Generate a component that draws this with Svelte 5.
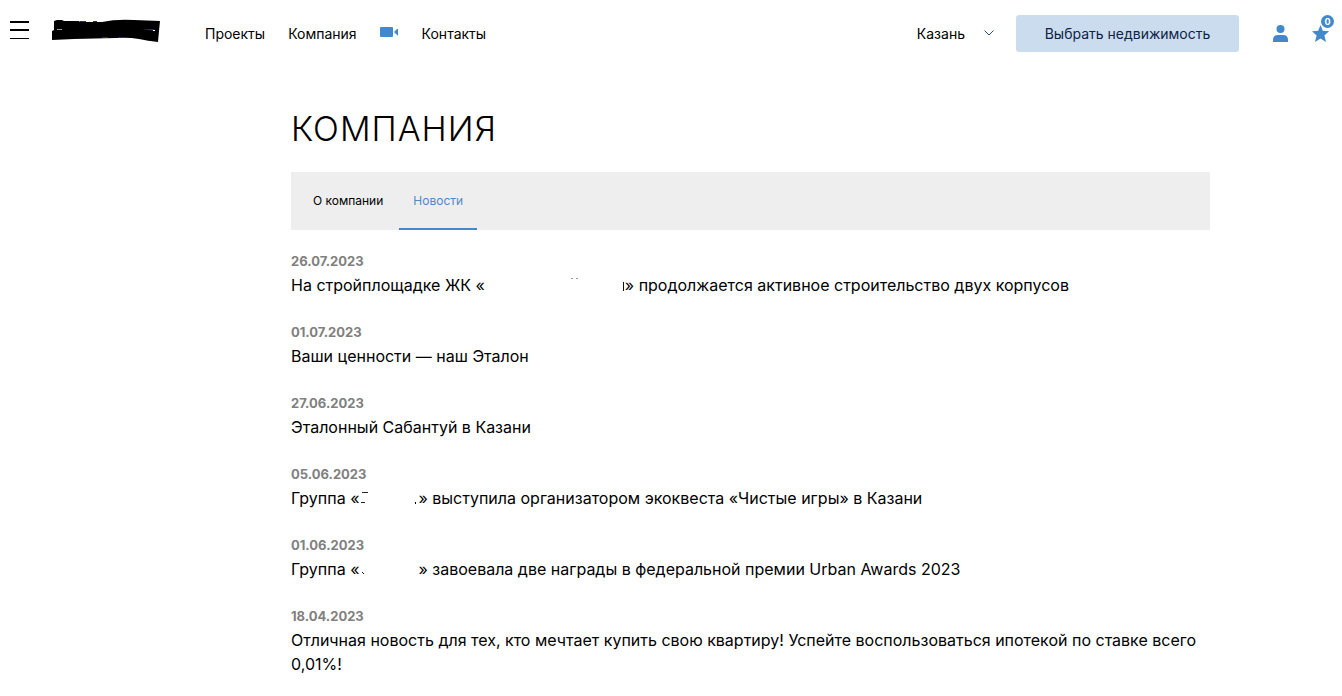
<script>
  const news = [
    { date: '26.07.2023', before: 'На стройплощадке ЖК «', gap: 'project', after: '» продолжается активное строительство двух корпусов' },
    { date: '01.07.2023', before: 'Ваши ценности — наш Эталон' },
    { date: '27.06.2023', before: 'Эталонный Сабантуй в Казани' },
    { date: '05.06.2023', before: 'Группа «', gap: 'group', after: '» выступила организатором экоквеста «Чистые игры» в Казани' },
    { date: '01.06.2023', before: 'Группа «', gap: 'award', after: '» завоевала две награды в федеральной премии Urban Awards 2023' },
    { date: '18.04.2023', before: 'Отличная новость для тех, кто мечтает купить свою квартиру! Успейте воспользоваться ипотекой по ставке всего 0,01%!' }
  ];
</script>

<header class="topbar">
  <button class="menu" aria-label="Меню"><span></span><span></span><span></span></button>
  <a class="logo" href="#home" aria-label="Главная">
    <svg width="108" height="24" viewBox="0 0 108 24">
      <path fill="#000" d="M2 2 L5 1 L10 1 L12 2 L27 2 L28 3 L50 3 Q64 0 82 1 L108 2 L107 12 L106 23 Q96 22 87 20 Q76 18 64 19 L22 20 L0 21 V12 L2 11 Z" />
      <path fill="#29296b" d="M28 2h6v1h-6zM41 2h4v1h-4zM90 10h12v2zM50 18h6v1h-6zM66 18h4v1h-4z" />
      <path fill="#999" d="M5 10h5v1H5z" />
      <path fill="#fff" d="M101 11h2v1h-2z" />
    </svg>
  </a>
  <nav class="links">
    <a href="#projects">Проекты</a>
    <a href="#company">Компания</a>
    <a class="video" href="#video" aria-label="Видео">
      <svg width="19" height="12" viewBox="0 0 19 12" fill="#4189cc">
        <rect x="0" y="0" width="13" height="10" rx="1" />
        <path d="M14 5 L17 2 Q18 1 18 3 V8 Q18 9 17 8 Z" />
      </svg>
    </a>
    <a href="#contacts">Контакты</a>
  </nav>
  <button class="city">Казань
    <svg width="10" height="6" viewBox="0 0 10 6" fill="none" stroke="#2d5578"><path d="M.5 .5 L5 5 L9.5 .5" /></svg>
  </button>
  <button class="choose">Выбрать недвижимость</button>
  <a class="user" href="#account" aria-label="Личный кабинет">
    <svg width="15" height="17" viewBox="0 0 15 17" fill="#4189cc">
      <circle cx="7.5" cy="4" r="4" />
      <path d="M0 17 V15 Q0 10 5 10 H10 Q15 10 15 15 V17 Z" />
    </svg>
  </a>
  <a class="favorites" href="#favorites" aria-label="Избранное">
    <svg width="18" height="17" viewBox="0 0 18 17" fill="#4189cc">
      <path d="M8.5 0 L10.8 5.8 L17 6.2 L12.4 10.4 L14 17 L8.5 13.4 L3 17 L4.6 10.4 L0 6.2 L6.2 5.8 Z" />
    </svg>
    <span class="badge">0</span>
  </a>
</header>

<main>
  <h1>КОМПАНИЯ</h1>
  <nav class="tabs">
    <a href="#about">О компании</a>
    <a class="active" href="#news" aria-current="page">Новости</a>
  </nav>
  {#each news as item}
    <article>
      <time>{item.date}</time>
      <p>{item.before}{#if item.gap}<svg class="gap {item.gap}" height="16" aria-hidden="true">
        {#if item.gap === 'project'}
          <path d="M86 .5h2M91 .5h2" stroke="#999" /><path d="M138.5 4v9" stroke="#111" />
        {:else if item.gap === 'group'}
          <path d="M3 1.500h6M2 11.500h4" stroke="#222" fill="none" /><path d="M56 11h1v2h-1z" />
        {:else}
          <path d="M3 10l2 2" stroke="#222" />
        {/if}
      </svg>{/if}{item.after ?? ''}</p>
    </article>
  {/each}
</main>

<style>
  :global(body) { margin: 0; background: #fff; color: #000; font-family: Inter, "Noto Sans", sans-serif; }
  a { color: inherit; text-decoration: none; }
  button { border: 0; padding: 0; background: none; color: inherit; font: inherit; cursor: pointer; }
  svg { display: block; }
  .topbar { display: flex; align-items: center; height: 66px; padding: 0 12px 0 10px; font-size: 14px; }
  .menu { display: grid; gap: 6px; width: 19px; margin-right: 23px; padding-bottom: 6px; }
  .menu span { height: 2px; background: #000; }
  .menu span:last-child { height: 1px; margin-top: 1px; }
  .logo { margin-right: 45px; padding-bottom: 5px; }
  .links { display: flex; align-items: center; gap: 23px; margin-right: auto; }
  .city { display: flex; align-items: center; gap: 19px; margin-right: 22px; }
  .choose { width: 223px; height: 37px; margin-right: 34px; border-radius: 3px; background: #cbdcee; color: #0c2347; }
  .user { margin-right: 24px; }
  .favorites { position: relative; }
  .badge { position: absolute; top: -10px; right: -4px; width: 13px; height: 13px; border-radius: 50%; background: #4189cc; color: #fff; font-size: 9px; font-weight: 700; line-height: 13px; text-align: center; }
  main { margin: 0 132px 0 291px; }
  h1 { margin: 41px 0 21px; font-size: 34px; font-weight: 300; line-height: 44px; letter-spacing: 1px; }
  .tabs { display: flex; gap: 2px; height: 58px; margin-bottom: 20px; padding-left: 8px; background: #eee; font-size: 12px; line-height: 58px; }
  .tabs a { box-sizing: border-box; padding: 0 14px; }
  .tabs .active { color: #5288c7; border-bottom: 2px solid #4189cc; }
  article { margin-bottom: 24px; font-size: 16px; line-height: 24px; }
  time { display: block; color: #808080; font-size: 13px; font-weight: 700; line-height: 23px; }
  p { margin: 0; }
  .gap { display: inline-block; vertical-align: -3px; }
  .project { width: 140px; }
  .group { width: 59px; }
  .award { width: 59px; }
</style>
